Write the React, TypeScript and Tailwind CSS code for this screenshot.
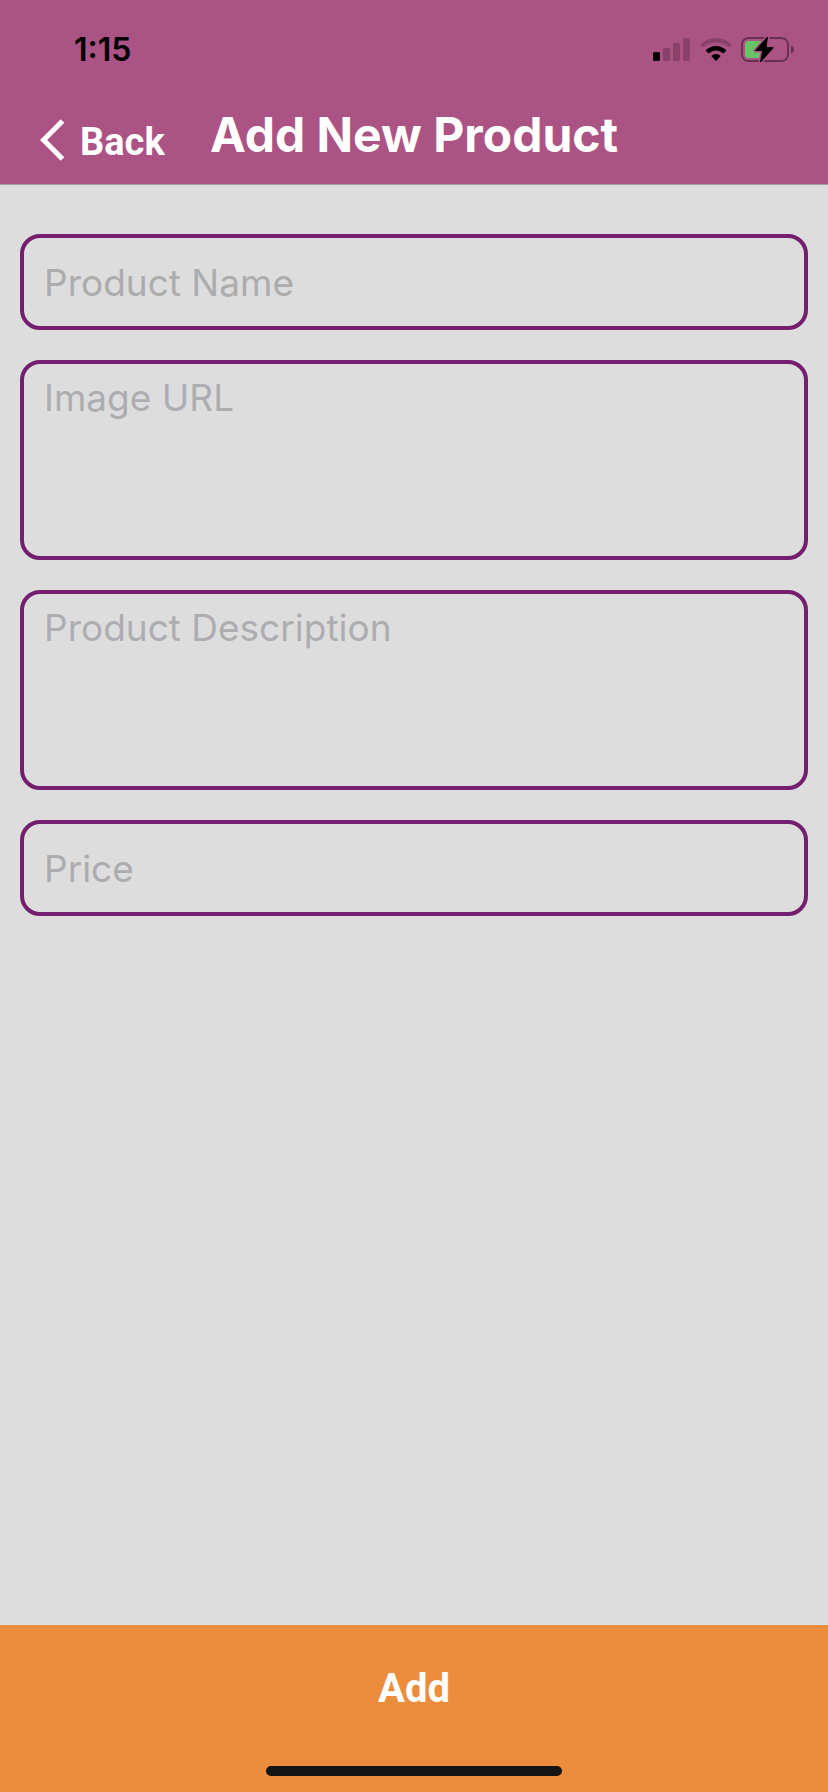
import React from "react";

function SignalIcon() {
  return (
    <svg width="38" height="24" viewBox="0 0 38 24" aria-hidden="true">
      <rect x="0" y="14" width="7" height="9" rx="1.6" fill="#000" />
      <g fill="#000" fillOpacity="0.2">
        <rect x="10" y="10" width="7" height="13" rx="1.6" />
        <rect x="20" y="5" width="7" height="18" rx="1.6" />
        <rect x="30" y="0" width="7" height="23" rx="1.6" />
      </g>
    </svg>
  );
}

function WifiIcon() {
  return (
    <svg width="32" height="24" viewBox="0 0 32 24" aria-hidden="true">
      <path
        d="M16 0C21.900 0 27.200 2.200 31.200 5.900C31.600 6.300 31.600 6.700 31.300 7.100L29.300 9.100C28.900 9.500 28.500 9.500 28.100 9.100C24.900 6.100 20.700 4.500 16 4.500C11.300 4.500 7.100 6.100 3.900 9.100C3.500 9.500 3.100 9.500 2.700 9.100L0.700 7.100C0.400 6.700 0.400 6.300 0.800 5.900C4.800 2.200 10.100 0 16 0Z"
        fill="#000"
        fillOpacity="0.2"
      />
      <path
        d="M16 8C19.800 8 23.200 9.400 25.800 11.700C26.200 12.100 26.200 12.500 25.900 12.900L23.800 14.900C23.400 15.300 23 15.300 22.600 15C20.800 13.400 18.500 12.500 16 12.500C13.500 12.500 11.200 13.400 9.400 15C9 15.300 8.600 15.300 8.200 14.900L6.100 12.900C5.800 12.500 5.800 12.100 6.200 11.700C8.800 9.400 12.200 8 16 8Z"
        fill="#000"
      />
      <path
        d="M16 16C17.600 16 19.100 16.600 20.200 17.500C20.600 17.900 20.600 18.300 20.300 18.600L16.600 22.400C16.200 22.800 15.800 22.800 15.400 22.400L11.700 18.600C11.400 18.300 11.400 17.900 11.800 17.500C12.900 16.600 14.400 16 16 16Z"
        fill="#000"
      />
    </svg>
  );
}

function BatteryIcon() {
  return (
    <svg width="54" height="28" viewBox="0 0 54 28" aria-hidden="true">
      <rect x="1" y="2" width="46" height="23" rx="6.500" fill="none" stroke="#000" strokeOpacity="0.4" strokeWidth="2" />
      <path d="M50 9.500C52 10.300 53 11.700 53 13.500C53 15.300 52 16.700 50 17.500Z" fill="#000" fillOpacity="0.4" />
      <path d="M7.500 5H21V22H7.500Q4 22 4 18.500V8.500Q4 5 7.500 5Z" fill="#66c466" />
      <path
        d="M26.500 1L14.500 14.500H21.800L19.500 26L32.300 11.700H25Z"
        fill="#000"
        stroke="#ab5385"
        strokeWidth="4"
        strokeLinejoin="round"
      />
      <path
        d="M26.500 1L14.500 14.500H21.800L19.500 26L32.300 11.700H25Z"
        fill="#000"
        stroke="#000"
        strokeWidth="1"
        strokeLinejoin="round"
      />
    </svg>
  );
}

function StatusBar() {
  return (
    <div className="flex h-24 items-center justify-between pt-1 pr-[33px] pl-[74px]">
      <span className="font-['Inter',sans-serif] text-[32px] font-semibold text-black">1:15</span>
      <div className="flex items-center gap-[9px]">
        <SignalIcon />
        <WifiIcon />
        <BatteryIcon />
      </div>
    </div>
  );
}

const fieldClass =
  "block w-full resize-none rounded-[20px] border-4 border-[#731f6d] bg-transparent px-5 text-[37px] leading-12 text-[#222222] outline-none";

export default function App() {
  return (
    <div className="flex min-h-screen flex-col bg-[#dddddd] font-['Inter',sans-serif]">
      <header className="border-b border-[#a3a0a2] bg-[#ab5385]">
        <StatusBar />
        <div className="grid h-22 grid-cols-[1fr_auto_1fr] items-start">
          <button
            type="button"
            className="flex items-center gap-[15px] pt-[18px] pl-10 font-['Roboto',sans-serif] text-[38px] leading-12 font-bold text-white"
          >
            <svg width="25" height="42" viewBox="0 0 25 42" fill="none" stroke="#fff" strokeWidth="5" aria-hidden="true">
              <path d="M22.500 2L3.600 21L22.500 40" />
            </svg>
            <span className="pt-1">Back</span>
          </button>
          <h1 className="pt-[11px] text-[48px] leading-14 font-bold text-white">Add New Product</h1>
        </div>
      </header>

      <form
        id="product-form"
        className="flex flex-1 flex-col gap-[30px] px-5 pt-[49px] pb-12"
        onSubmit={(e) => e.preventDefault()}
      >
        <input
          type="text"
          aria-label="Product Name"
          placeholder="Product Name"
          className={`${fieldClass} h-24 placeholder:text-[#acacac]`}
        />
        <textarea
          aria-label="Image URL"
          placeholder="Image URL"
          className={`${fieldClass} h-50 py-2.5 placeholder:text-[#adadb1]`}
        />
        <textarea
          aria-label="Product Description"
          placeholder="Product Description"
          className={`${fieldClass} h-50 py-2.5 placeholder:text-[#adadb1]`}
        />
        <input
          type="text"
          inputMode="decimal"
          aria-label="Price"
          placeholder="Price"
          className={`${fieldClass} h-24 placeholder:text-[#acacac]`}
        />
      </form>

      <footer className="flex flex-col items-center bg-[#eb8d3c] pb-4">
        <button
          type="submit"
          form="product-form"
          className="h-32 w-full font-['Roboto',sans-serif] text-[40px] font-bold text-white"
        >
          Add
        </button>
        <div className="mt-[13px] h-[10px] w-74 rounded-full bg-[#151515]" />
      </footer>
    </div>
  );
}
